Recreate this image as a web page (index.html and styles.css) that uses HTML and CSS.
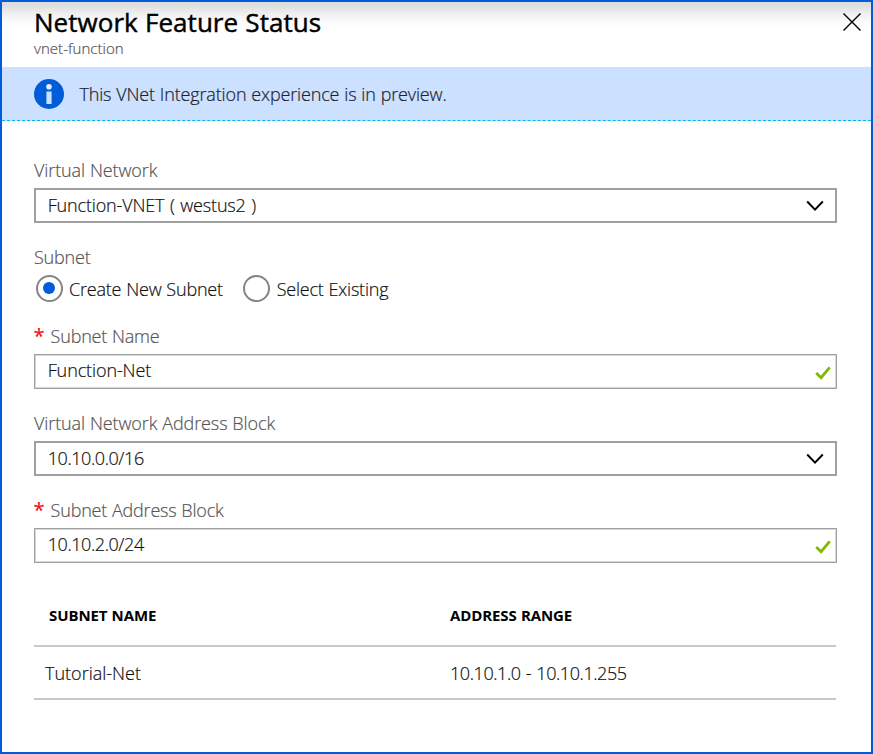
FILE: index.html
```html
<!DOCTYPE html>
<html lang="en">
<head>
<meta charset="utf-8">
<title>Network Feature Status</title>
<link rel="stylesheet" href="styles.css">
</head>
<body>
<main class="blade">
  <header class="blade-header">
    <div>
      <h1 class="title">Network Feature Status</h1>
      <p class="subtitle">vnet-function</p>
    </div>
    <svg class="close" width="18" height="18" viewBox="0 0 18 18"><path d="M.5.5l17 17M17.5.5l-17 17"/></svg>
  </header>
  <div class="banner">
    <svg width="30" height="30" viewBox="0 0 30 30"><circle cx="15" cy="15" r="15" fill="#015cda"/><circle cx="15" cy="7.7" r="2.8" fill="#e3edfc"/><path d="M12.4 12.6h5.2V25h-5.2z" fill="#cce0ff"/></svg>
    <span>This VNet Integration experience is in preview.</span>
  </div>
  <form class="form">
    <div class="field">
      <span class="label normal">Virtual Network</span>
      <div class="box select"><span class="network">Function-VNET ( westus2 )</span><svg class="chevron" width="18" height="12" viewBox="0 0 18 12"><path d="M1.2 1.5L9 9.6l7.8-8.1"/></svg></div>
    </div>
    <div class="field">
      <span class="label">Subnet</span>
      <div class="radios">
        <span class="radio checked"></span><span class="radio-text">Create New Subnet</span>
        <span class="radio"></span><span class="radio-text">Select Existing</span>
      </div>
    </div>
    <div class="field">
      <span class="label"><span class="required">*</span>Subnet Name</span>
      <div class="box input"><span class="normal">Function-Net</span><svg class="check" width="16" height="14" viewBox="0 0 16 14"><path d="M1.2 7l4.9 4.7L14.7 1.3"/></svg></div>
    </div>
    <div class="field">
      <span class="label normal">Virtual Network Address Block</span>
      <div class="box select"><span class="digits">10.10.0.0/16</span><svg class="chevron" width="18" height="12" viewBox="0 0 18 12"><path d="M1.2 1.5L9 9.6l7.8-8.1"/></svg></div>
    </div>
    <div class="field">
      <span class="label"><span class="required">*</span>Subnet Address Block</span>
      <div class="box input"><span class="digits">10.10.2.0/24</span><svg class="check" width="16" height="14" viewBox="0 0 16 14"><path d="M1.2 7l4.9 4.7L14.7 1.3"/></svg></div>
    </div>
  </form>
  <section class="subnets">
    <div class="row head"><span>SUBNET NAME</span><span>ADDRESS RANGE</span></div>
    <div class="row"><span class="name">Tutorial-Net</span><span class="digits">10.10.1.0 - 10.10.1.255</span></div>
  </section>
</main>
</body>
</html>
```
FILE: styles.css
```css
* { box-sizing: border-box; }
body {
  margin: 0;
  font: 300 18px/24px "Open Sans", "Noto Sans", sans-serif;
  letter-spacing: -0.2px;
  word-spacing: 0.4px;
  color: #111;
  -webkit-text-stroke: 0.2px currentColor;
}
.blade { height: 754px; border: 2px solid #015cda; background: #fff; overflow: hidden; }
.blade-header {
  display: flex;
  justify-content: space-between;
  height: 65px;
  padding: 2px 10px 0 32px;
  background: linear-gradient(#dcdcdc 0, #dfdfdf 4px, #f0f0f0 12px, #fbfbfb 20px, #fff 28px);
}
.title {
  margin: 0;
  font-size: 26px;
  line-height: 36px;
  font-weight: 400;
  letter-spacing: 0.04px;
  color: #000;
  -webkit-text-stroke: 0.45px #000;
}
.subtitle { margin: -2px 0 0; font-size: 15px; line-height: 20px; letter-spacing: 0.04px; color: #555; }
.close { margin-top: 9px; fill: none; stroke: #000; stroke-width: 1.4; }
.banner {
  display: flex;
  gap: 15px;
  height: 54px;
  padding: 12px 32px 0;
  background: #cce0ff;
  border-bottom: 1px dashed #00b7f0;
  color: #1c222c;
  letter-spacing: -0.15px;
}
.banner span { margin: 3px 0 0 0.4px; }
.form { display: flex; flex-direction: column; gap: 22px; padding: 37px 34px 0 32px; }
.field { display: flex; flex-direction: column; gap: 6px; }
.label { color: #555; }
.normal { letter-spacing: -0.11px; }
.network { letter-spacing: -0.16px; word-spacing: 1.1px; }
.name { letter-spacing: 0; }
.digits { letter-spacing: -0.43px; word-spacing: 0.9px; }
.required {
  display: inline-block;
  width: 16.6px;
  font-weight: 500;
  font-size: 20px;
  line-height: 20px;
  color: #e81123;
  text-indent: -0.6px;
}
.box { display: flex; justify-content: space-between; height: 35px; width: 803px; }
.select { border: 2px solid #a0a0a0; padding: 3px 11px 0 11.7px; }
.input { border: 1px solid #a0a0a0; box-shadow: inset 0 0 0 1px #d8d8d8; padding: 3px 5px 0 12.7px; }
.chevron { margin-top: 7px; fill: none; stroke: #000; stroke-width: 2; }
.check { margin-top: 7.5px; fill: none; stroke: #7fba00; stroke-width: 2.8; }
.radios { display: flex; height: 27px; padding-left: 2px; }
.radio { display: grid; place-items: center; width: 27px; height: 27px; border: 2px solid #858585; border-radius: 50%; }
.checked::after { content: ""; width: 12px; height: 12px; margin: 0 1px 1px 0; border-radius: 50%; background: #015cda; }
.radio-text { margin: 2px 0 0 6px; }
.radio-text + .radio { margin-left: 20px; }
.radio-text + .radio + .radio-text { margin-left: 6.8px; }
.subnets { width: 802px; margin-left: 32px; }
.row { display: grid; grid-template-columns: 405px 1fr; padding: 14px 0 13px 11px; border-bottom: 2px solid #c8c8c8; }
.head {
  grid-template-columns: 401px 1fr;
  padding: 42px 0 20px 15px;
  font-size: 15px;
  line-height: 20px;
  font-weight: 700;
  letter-spacing: -0.1px;
  color: #000;
  -webkit-text-stroke: 0;
}
```
